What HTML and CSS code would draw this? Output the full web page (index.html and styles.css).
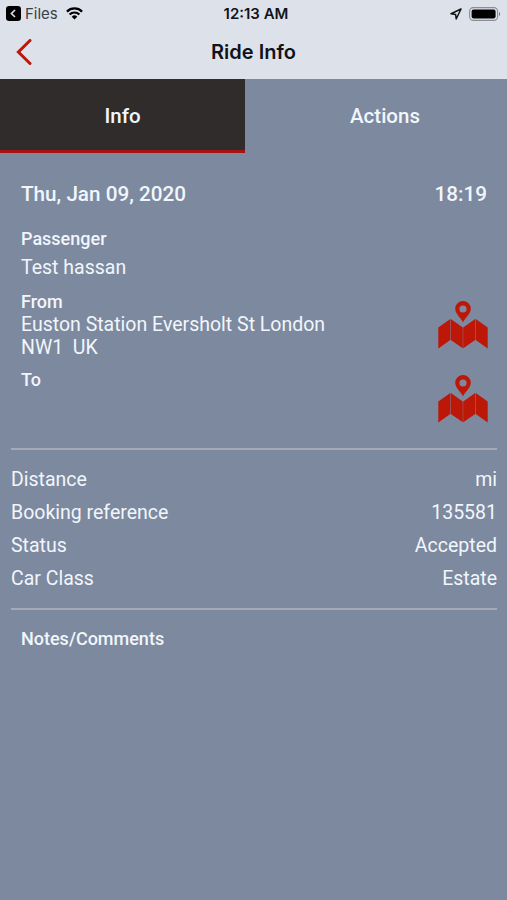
FILE: index.html
```
<!DOCTYPE html>
<html lang="en">
<head>
  <meta charset="UTF-8" />
  <meta name="viewport" content="width=device-width, initial-scale=1" />
  <title>Ride Info</title>
  <link rel="stylesheet" href="styles.css">
</head>
<body>
  <header>
    <div class="status-bar">
      <div class="status-left">
        <svg class="back-app" viewBox="0 0 15 15"><rect width="15" height="15" rx="3.2" fill="#000"/><path d="M9 4 5.4 7.5 9 11" fill="none" stroke="#dde2ec" stroke-width="1.6"/></svg>
        <span class="app-name">Files</span>
        <svg class="wifi" viewBox="0 0 17 13"><g fill="none" stroke="#000" stroke-width="2.2"><path d="M.9 4.6a10.8 10.8 0 0 1 15.2 0"/><path d="M3.6 7.5a7 7 0 0 1 9.8 0"/></g><path d="M8.5 12.5 5.7 9.7a4 4 0 0 1 5.6 0z"/></svg>
      </div>
      <span class="clock">12:13 AM</span>
      <div class="status-right">
        <svg class="location" viewBox="0 0 12 12"><path d="M11 1 1 5.7l4.6.7.6 4.600z" fill="none" stroke="#111" stroke-width="1.5" stroke-linejoin="round"/></svg>
        <svg class="battery" viewBox="0 0 32 14"><rect x=".6" y=".6" width="28" height="12.8" rx="3.6" fill="none" stroke="#8b8e94" stroke-width="1.1"/><rect x="2.600" y="2.600" width="24" height="8.8" rx="1.8"/><path d="M30 5c1.6.5 1.6 3.5 0 4z" fill="#777b82"/></svg>
      </div>
    </div>
    <div class="title-bar">
      <a href="#" class="back"><svg viewBox="0 0 16 26"><path d="M14 1.5 2.4 13 14 24.5" fill="none" stroke="#bd1708" stroke-width="3" stroke-linecap="round"/></svg></a>
      <h1>Ride Info</h1>
    </div>
  </header>

  <nav>
    <a href="#" class="active">Info</a>
    <a href="#">Actions</a>
  </nav>

  <main>
    <section class="trip">
      <div class="date">
        <span>Thu, Jan 09, 2020</span>
        <span>18:19</span>
      </div>
      <h3>Passenger</h3>
      <p class="passenger">Test hassan</p>
      <div class="place">
        <div>
          <h3>From</h3>
          <p>Euston Station Eversholt St London<br>NW1&nbsp; UK</p>
        </div>
        <svg class="map" viewBox="0 0 50 48"><use href="#map-icon"/></svg>
      </div>
      <div class="place">
        <h3 class="to">To</h3>
        <svg class="map" viewBox="0 0 50 48"><use href="#map-icon"/></svg>
      </div>
    </section>

    <section class="details">
      <div class="row"><span>Distance</span><span>mi</span></div>
      <div class="row"><span>Booking reference</span><span>135581</span></div>
      <div class="row"><span>Status</span><span>Accepted</span></div>
      <div class="row"><span>Car Class</span><span>Estate</span></div>
    </section>

    <h3 class="notes">Notes/Comments</h3>
  </main>

  <svg class="symbols">
    <symbol id="map-icon" viewBox="0 0 50 48">
      <path fill-rule="evenodd" d="M25 0a7.800 7.800 0 0 1 7.800 7.800C32.800 12.500 28 16 25 21.300 22 16 17.200 12.500 17.200 7.800A7.800 7.800 0 0 1 25 0zm0 4.400a3.600 3.600 0 1 0 0 7.200 3.600 3.600 0 0 0 0-7.200z"/>
      <path d="M.3 26.500 12.300 18v21L.3 47.500zM12.800 18l12 8.500v20.800l-12-8.300zM25.200 26.500l12-8.500v21l-12 8.300zM37.700 18l12 8.500v21l-12-8.500z"/>
    </symbol>
  </svg>
</body>
</html>
```
FILE: styles.css
```
* {
  margin: 0;
  padding: 0;
  box-sizing: border-box;
}
body {
  min-height: 100vh;
  font-family: Roboto, sans-serif;
  font-size: 19.5px;
  letter-spacing: 0;
  background-color: #7d899f;
  color: #f1f6fc;
}
a {
  color: inherit;
  text-decoration: none;
}
svg {
  display: block;
}

header {
  height: 79px;
  background-color: #dde2ea;
  color: #111319;
}
.status-bar {
  display: grid;
  grid-template-columns: 1fr auto 1fr;
  align-items: center;
  height: 27px;
  padding: 0 6px;
  font-family: Inter, sans-serif;
  font-size: 15px;
}
.status-left,
.status-right {
  display: flex;
  align-items: center;
}
.status-right {
  justify-content: flex-end;
  gap: 7px;
}
.back-app {
  width: 15px;
  height: 15px;
}
.app-name {
  margin: 0 8px 0 4px;
  color: #3b3e46;
}
.wifi {
  width: 17px;
  height: 13px;
}
.clock {
  padding-left: 5px;
  font-weight: 600;
  font-size: 15px;
}
.location {
  width: 12px;
  height: 12px;
}
.battery {
  width: 32px;
  height: 14px;
}
.title-bar {
  display: grid;
  grid-template-columns: 1fr auto 1fr;
  align-items: center;
  height: 50px;
  padding: 0 16px;
}
.back svg {
  width: 16px;
  height: 26px;
}
h1 {
  font-family: Inter, sans-serif;
  font-size: 20px;
  font-weight: 600;
}

nav {
  display: flex;
  height: 74px;
}
nav a {
  flex: 1;
  padding-left: 18px;
  line-height: 74px;
  text-align: center;
  font-size: 20.5px;
  font-weight: 500;
}
nav .active {
  flex: 0 0 245px;
  padding-left: 0;
  background-color: #302c2b;
  border-bottom: 3px solid #a51314;
}

.trip {
  height: 297px;
  margin: 0 10px 0 11px;
  padding: 29px 9px 0 10px;
  border-bottom: 2px solid #a4abb6;
}
.date {
  display: flex;
  justify-content: space-between;
  margin-bottom: 22px;
  padding-right: 1px;
  font-size: 20.7px;
  font-weight: 500;
  line-height: 24px;
}
h3 {
  font-size: 18px;
  font-weight: 500;
  line-height: 22px;
}
.passenger {
  margin: 6px 0 12px;
}
p {
  line-height: 23px;
}
.place {
  display: flex;
  justify-content: space-between;
  height: 74px;
}
.to {
  padding-top: 4px;
}
.map {
  width: 50px;
  height: 48px;
  margin-top: 10px;
  fill: #bd1708;
}
.details {
  height: 160px;
  margin: 0 10px 0 11px;
  padding-top: 13px;
  border-bottom: 2px solid #a4abb6;
}
.row {
  display: flex;
  justify-content: space-between;
  line-height: 33px;
}
.notes {
  margin: 18px 21px;
}
.symbols {
  position: absolute;
  width: 0;
  height: 0;
}
```
